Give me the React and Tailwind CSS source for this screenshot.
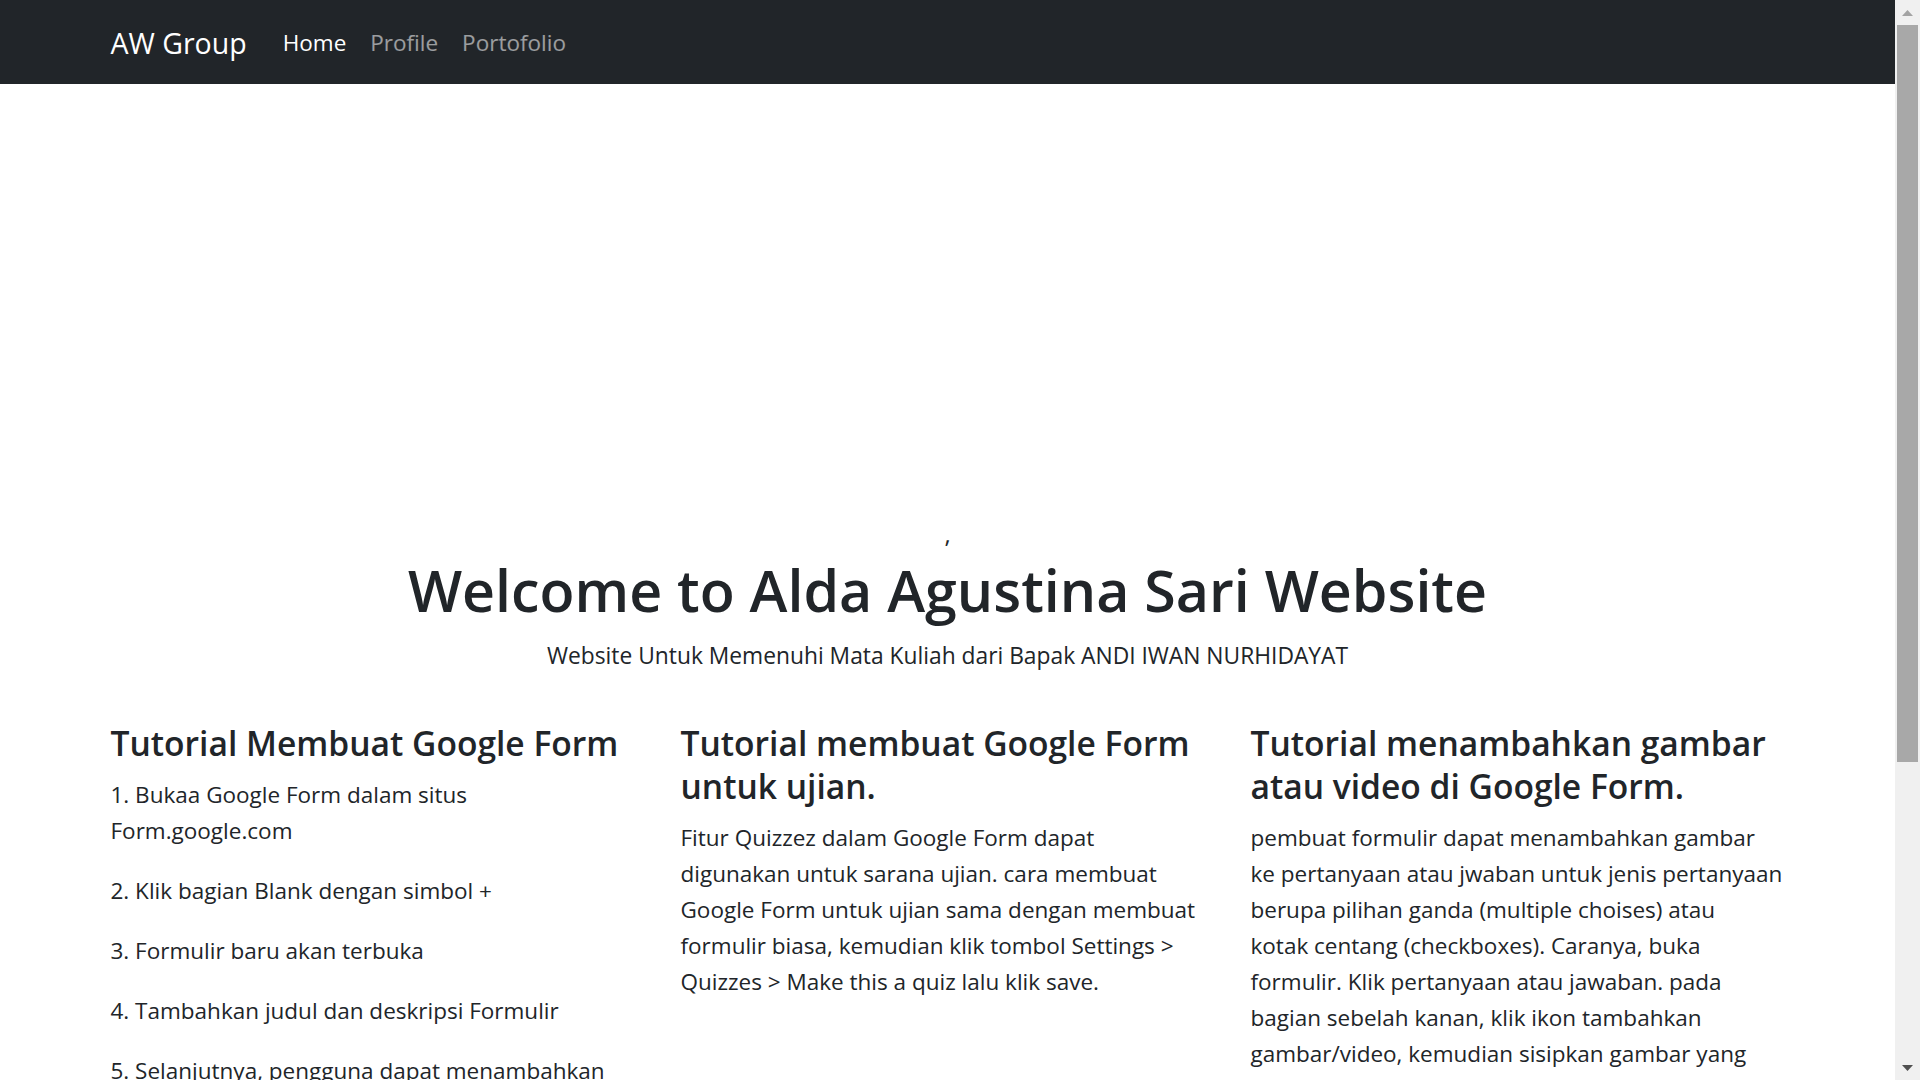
export default function App() {
  const font = { fontFamily: '"Open Sans", "Noto Sans", sans-serif' };
  const p = "mb-[24px] text-[22.5px] leading-[36px] whitespace-nowrap";
  const h = "mb-[12px] text-[33.6px] font-semibold leading-[43px] whitespace-nowrap";
  return (
    <div className="flex h-screen w-full overflow-hidden bg-white text-[#212529]" style={font}>
      <div className="flex-1 min-w-0 overflow-hidden">
        <nav className="h-[84px] bg-[#212529]">
          <div className="mx-auto flex h-full w-[1710px] items-center px-[18px] pt-[2px]">
            <span className="mr-[24px] text-[28.5px] leading-[45px] text-white">AW Group</span>
            <span className="px-[12px] text-[22.5px] leading-[36px] text-white">Home</span>
            <span className="px-[12px] text-[22.5px] leading-[36px] text-white/55">Profile</span>
            <span className="px-[12px] text-[22.5px] leading-[36px] text-white/55">Portofolio</span>
          </div>
        </nav>
        <div className="h-[432px]"></div>
        <div className="mx-auto w-[1710px] px-[18px]">
          <div className="h-[36px] text-center text-[24px] leading-[36px]">,</div>
          <h1 className="mt-[2px] mb-[12px] text-center text-[57.3px] font-semibold leading-[72px]">Welcome to Alda Agustina Sari Website</h1>
          <p className="text-center text-[22.8px] leading-[36px]">Website Untuk Memenuhi Mata Kuliah dari Bapak ANDI IWAN NURHIDAYAT</p>
          <div className="mt-[48px] grid grid-cols-3 mx-[-18px]">
            <div className="px-[18px]">
              <h4 className={h}>Tutorial Membuat Google Form</h4>
              <p className={p}>1. Bukaa Google Form dalam situs<br />Form.google.com</p>
              <p className={p}>2. Klik bagian Blank dengan simbol +</p>
              <p className={p}>3. Formulir baru akan terbuka</p>
              <p className={p}>4. Tambahkan judul dan deskripsi Formulir</p>
              <p className={p}>5. Selanjutnya, pengguna dapat menambahkan</p>
            </div>
            <div className="px-[18px]">
              <h4 className={h}>Tutorial membuat Google Form<br />untuk ujian.</h4>
              <p className={p}>
                Fitur Quizzez dalam Google Form dapat<br />
                digunakan untuk sarana ujian. cara membuat<br />
                Google Form untuk ujian sama dengan membuat<br />
                formulir biasa, kemudian klik tombol Settings &gt;<br />
                Quizzes &gt; Make this a quiz lalu klik save.
              </p>
            </div>
            <div className="px-[18px]">
              <h4 className={h}>Tutorial menambahkan gambar<br />atau video di Google Form.</h4>
              <p className={p}>
                pembuat formulir dapat menambahkan gambar<br />
                ke pertanyaan atau jwaban untuk jenis pertanyaan<br />
                berupa pilihan ganda (multiple choises) atau<br />
                kotak centang (checkboxes). Caranya, buka<br />
                formulir. Klik pertanyaan atau jawaban. pada<br />
                bagian sebelah kanan, klik ikon tambahkan<br />
                gambar/video, kemudian sisipkan gambar yang<br />
                ingin ditambahkan.
              </p>
            </div>
          </div>
        </div>
      </div>
      <div className="flex h-full w-[25px] shrink-0 flex-col items-center bg-[#f0f0f0]">
        <div className="flex h-[25px] w-full items-center justify-center">
          <svg width="11" height="6" viewBox="0 0 11 6"><path d="M5.5 0L11 6H0z" fill="#a3a3a3" /></svg>
        </div>
        <div className="h-[737px] w-[21px] bg-[#a8a8a8]"></div>
        <div className="flex-1"></div>
        <div className="flex h-[25px] w-full items-center justify-center">
          <svg width="11" height="6" viewBox="0 0 11 6"><path d="M0 0H11L5.5 6z" fill="#505050" /></svg>
        </div>
      </div>
    </div>
  );
}
